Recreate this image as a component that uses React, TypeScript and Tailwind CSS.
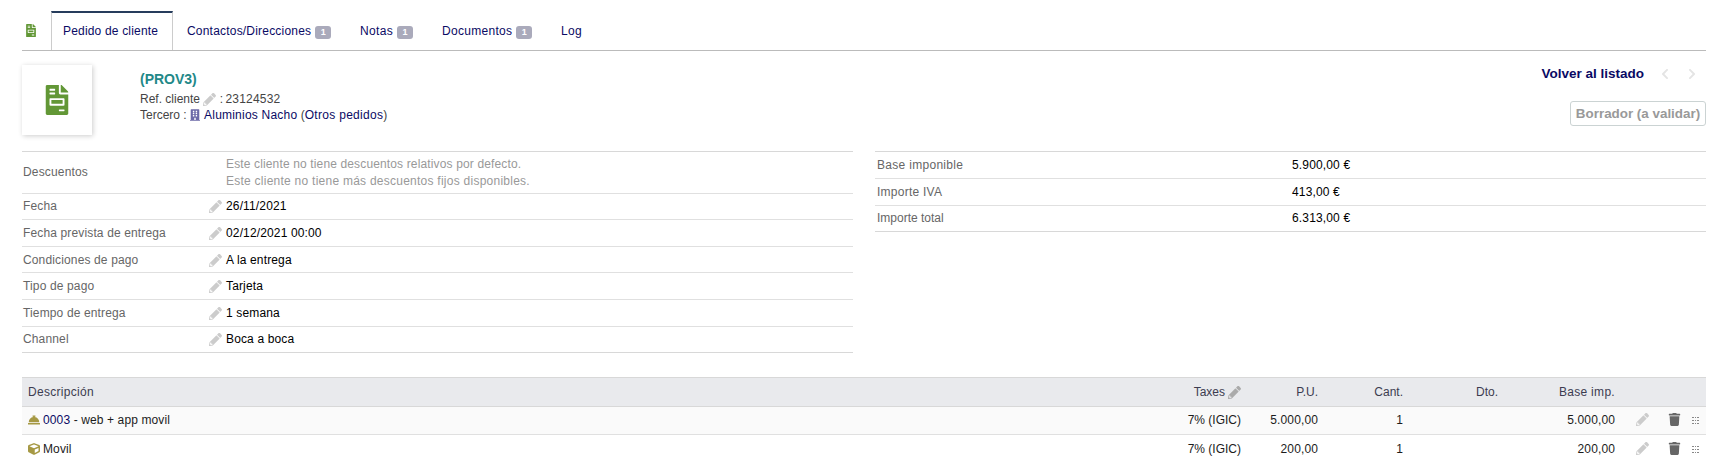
import type { ReactNode } from "react";
import {
  FaBuilding,
  FaChevronLeft,
  FaChevronRight,
  FaConciergeBell,
  FaCube,
  FaFileInvoice,
  FaTrash,
} from "react-icons/fa";

function Pencil({ className }: { className: string }) {
  return (
    <svg viewBox="0 0 512 512" className={`h-[13px] w-[13px] shrink-0 ${className}`} fill="currentColor">
      <path d="M497.9 142.1l-46.1 46.1c-4.700 4.700-12.300 4.700-17 0l-111-111c-4.700-4.700-4.700-12.300 0-17l46.100-46.100c18.700-18.700 49.100-18.700 67.900 0l60.100 60.100c18.800 18.700 18.800 49.100 0 67.900zM284.200 99.800L21.600 362.400.4 483.900c-2.900 16.400 11.400 30.600 27.800 27.800l121.500-21.300 262.600-262.600c4.700-4.700 4.700-12.300 0-17l-111-111c-4.800-4.700-12.400-4.700-17.100 0zM88 424h48v36.300l-64.500 11.300-31.100-31.100L51.700 376H88v48z" />
      <path d="M285 165L110 340L170 400L345 225Z" opacity="0.6" />
    </svg>
  );
}

function Badge({ children }: { children: ReactNode }) {
  return (
    <span className="ml-1 mt-[3px] flex h-[13px] w-4 items-center justify-center rounded-[3px] bg-[#aaaabb] text-[9px] font-bold leading-none tracking-normal text-white">
      {children}
    </span>
  );
}

function Tab({ label, count, className }: { label: string; count?: number; className: string }) {
  return (
    <a className={`flex shrink-0 items-center whitespace-nowrap text-[#0a0a64] ${className}`}>
      {label}
      {count !== undefined && <Badge>{count}</Badge>}
    </a>
  );
}

function Field({ label, value, className }: { label: string; value: string; className: string }) {
  return (
    <div className={`flex items-center border-b tracking-[0.14px] ${className}`}>
      <span className="w-[187px] pl-px text-[#666666]">{label}</span>
      <Pencil className="mr-1 mt-px text-[#cccccc]" />
      <span>{value}</span>
    </div>
  );
}

function Total({ label, value, className }: { label: ReactNode; value: string; className: string }) {
  return (
    <div className={`flex items-center border-b ${className}`}>
      <span className="w-[417px] pl-0.5 text-[#666666]">{label}</span>
      <span className="tracking-[0.15px] text-black">{value}</span>
    </div>
  );
}

function Grip() {
  return (
    <svg viewBox="0 0 7 7" className="h-[7px] w-[7px]" shapeRendering="crispEdges" fill="#888888">
      {[0, 3, 6].map((y) => (
        <g key={y}>
          <rect x="0" y={y} width="2" height="1" />
          <rect x="3" y={y} width="1" height="1" />
          <rect x="5" y={y} width="2" height="1" />
        </g>
      ))}
    </svg>
  );
}

function Line({ product, price, total, className }: { product: ReactNode; price: string; total: string; className: string }) {
  return (
    <div className={`flex items-center text-[#1c1c1c] ${className}`}>
      <div className="flex w-[1120px] items-center pl-1.5 tracking-[0.12px]">{product}</div>
      <span className="w-[99px] text-right">7% (IGIC)</span>
      <span className="w-[77px] text-right tracking-[0.12px]">{price}</span>
      <span className="w-[85px] text-right">1</span>
      <span className="w-[212px] text-right tracking-[0.12px]">{total}</span>
      <Pencil className="ml-[21px] text-[#cccccc]" />
      <FaTrash className="ml-[19px] h-[13px] w-[13px] text-[#666666]" />
      <span className="ml-[11px] mt-0.5">
        <Grip />
      </span>
    </div>
  );
}

export default function App() {
  return (
    <div className="h-[462px] w-[1721px] overflow-hidden bg-white pl-[22px] pr-[15px] font-['Liberation_Sans',Arial,sans-serif] text-[12px] leading-4 text-black">
      <nav className="flex h-[51px] items-stretch border-b border-[#bbbbbb] pt-[11px]">
        <div className="flex w-[29px] items-center pl-[3px]">
          <FaFileInvoice className="h-[13px] w-3 text-[#629736]" />
        </div>
        <Tab label="Pedido de cliente" className="w-[122px] border-x border-t-2 border-x-[#cccccc] border-t-[#263c5c] pb-0.5 pl-[11px] tracking-[0.18px]" />
        <Tab label="Contactos/Direcciones" count={1} className="w-[173px] pl-3.5 tracking-[0.2px]" />
        <Tab label="Notas" count={1} className="w-[82px] pl-3.5 tracking-[0.35px]" />
        <Tab label="Documentos" count={1} className="w-[119px] pl-3.5 tracking-[0.3px]" />
        <Tab label="Log" className="pl-3.5 tracking-[0.3px]" />
      </nav>

      <header className="flex h-[100px] pt-3.5">
        <div className="flex h-[70px] w-[70px] shrink-0 items-center justify-center bg-white shadow-[1px_1px_5px_rgba(0,0,0,0.2)]">
          <FaFileInvoice className="h-[30px] w-[30px] text-[#629736]" />
        </div>
        <div className="ml-12 flex-1 pt-1.5 text-[#444444]">
          <div className="h-5 text-[14px] font-bold leading-4 text-[#228888]">(PROV3)</div>
          <div className="flex items-center whitespace-pre">
            Ref. cliente <Pencil className="text-[#cccccc]" /> : <span className="-ml-px tracking-[0.2px]">23124532</span>
          </div>
          <div className="flex items-center whitespace-pre">
            Tercero : <FaBuilding className="h-3 w-[10px] text-[#6c6aa8]" />
            <span className="ml-1 tracking-[0.22px] text-[#0a0a64]">Aluminios Nacho</span> (<span className="tracking-[0.3px] text-[#0a0a64]">Otros pedidos</span>)
          </div>
        </div>
        <div className="flex flex-col items-end pt-px">
          <div className="flex h-4 items-center pr-[9px]">
            <span className="text-[13.5px] font-bold text-[#0a0a64]">Volver al listado</span>
            <FaChevronLeft className="ml-4 h-3 w-[10px] text-[#e4e4e4]" />
            <FaChevronRight className="ml-[17px] h-3 w-[10px] text-[#e4e4e4]" />
          </div>
          <div className="mt-[19px] flex h-[25px] w-[136px] items-center justify-center whitespace-nowrap rounded-[3px] border border-[#cbd3d3] text-[13.4px] font-bold text-[#999999]">
            Borrador (a validar)
          </div>
        </div>
      </header>

      <section className="flex h-[226px] items-start gap-[22px]">
        <div className="w-[831px] border-t border-[#d8d8d8]">
          <div className="flex h-[42px] items-center border-b border-[#e0e0e0]">
            <span className="w-[204px] pb-0.5 pl-px tracking-[0.16px] text-[#666666]">Descuentos</span>
            <div className="leading-[17px] text-[#999999]">
              <div className="tracking-[0.14px]">Este cliente no tiene descuentos relativos por defecto.</div>
              <div className="tracking-[0.25px]">Este cliente no tiene más descuentos fijos disponibles.</div>
            </div>
          </div>
          <Field className="h-[26px] border-[#e0e0e0] pb-0.5" label="Fecha" value="26/11/2021" />
          <Field className="h-[27px] border-[#e0e0e0]" label="Fecha prevista de entrega" value="02/12/2021 00:00" />
          <Field className="h-[26px] border-[#e0e0e0]" label="Condiciones de pago" value="A la entrega" />
          <Field className="h-[27px] border-[#e0e0e0]" label="Tipo de pago" value="Tarjeta" />
          <Field className="h-[27px] border-[#e0e0e0]" label="Tiempo de entrega" value="1 semana" />
          <Field className="h-[26px] border-[#d8d8d8] pb-0.5" label="Channel" value="Boca a boca" />
        </div>
        <div className="w-[831px] border-t border-[#d8d8d8]">
          <Total className="h-[27px] border-[#e0e0e0]" label={<span className="tracking-[0.3px]">Base imponible</span>} value="5.900,00 €" />
          <Total className="h-[27px] border-[#e0e0e0]" label={<span className="tracking-[0.25px]">Importe IVA</span>} value="413,00 €" />
          <Total className="h-[26px] border-[#d8d8d8] pb-0.5" label="Importe total" value="6.313,00 €" />
        </div>
      </section>

      <section>
        <div className="flex h-[30px] items-center border-y border-[#d8d8d8] bg-[#e9eaed] text-[#3c3c50]">
          <span className="w-[1120px] pl-1.5 tracking-[0.3px]">Descripción</span>
          <span className="flex w-[99px] items-center justify-end">
            Taxes <Pencil className="ml-[3px] text-[#aaaaaa]" />
          </span>
          <span className="w-[77px] text-right">P.U.</span>
          <span className="w-[85px] text-right">Cant.</span>
          <span className="w-[95px] text-right">Dto.</span>
          <span className="w-[117px] text-right tracking-[0.3px]">Base imp.</span>
        </div>
        <Line
          className="h-7 border-b border-[#e0e0e0] bg-[#fafafa] pb-0.5"
          price="5.000,00"
          total="5.000,00"
          product={
            <>
              <FaConciergeBell className="mr-[3px] h-3 w-3 text-[#a69944]" />
              <span className="whitespace-pre"><span className="text-[#0a0a64]">0003</span> - web + app movil</span>
            </>
          }
        />
        <Line
          className="h-[29px] pb-0.5"
          price="200,00"
          total="200,00"
          product={
            <>
              <FaCube className="mr-[3px] h-3 w-3 text-[#a69944]" />
              <span>Movil</span>
            </>
          }
        />
      </section>
    </div>
  );
}
